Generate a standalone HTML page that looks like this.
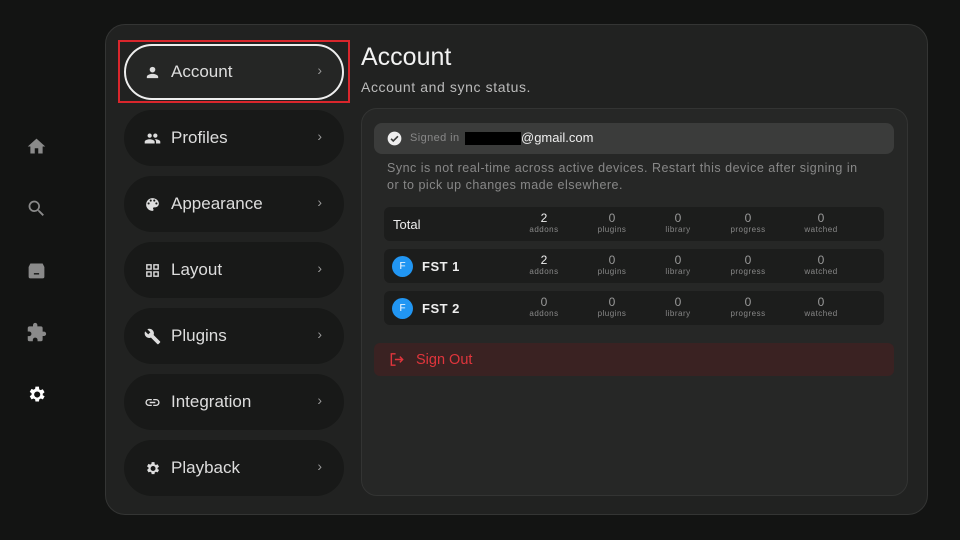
<!DOCTYPE html>
<html><head><meta charset="utf-8"><style>
*{margin:0;padding:0;box-sizing:border-box}
body{width:960px;height:540px;background:#131413;font-family:"Liberation Sans",sans-serif;position:relative;overflow:hidden;color:#eee}
.abs{position:absolute}
.panel{left:105px;top:24px;width:823px;height:491px;background:#212221;border:1px solid #343534;border-radius:20px}
.pill{position:absolute;left:124px;width:220px;height:56px;border-radius:28px;background:#181918;display:flex;align-items:center;padding-left:20px;font-size:17px;color:#ddd}
.pill svg{width:17px;height:17px;margin-right:10px;fill:#ddd}
.pill .ch{position:absolute;right:22px;top:18px;color:#999;font-size:14px}
.card{left:361px;top:108px;width:547px;height:388px;background:#262726;border:1px solid #333433;border-radius:16px}
.row{position:absolute;left:384px;width:500px;height:34px;background:#1c1d1c;border-radius:6px;font-size:13px;color:#eee}
.st{position:absolute;top:5px;width:60px;text-align:center;font-size:12px;color:#999;line-height:12px}
.st small{display:block;font-size:8px;color:#888;letter-spacing:.5px;line-height:11px}
.st.b{color:#eee}
.av{position:absolute;left:8px;top:7px;width:21px;height:21px;border-radius:50%;background:#2196f3;color:#fff;font-size:10px;text-align:center;line-height:21px}
.side svg{position:absolute;left:26px;width:21px;height:21px;fill:#8a8a8a}
</style></head><body>
<div class="side">
<svg style="top:136px" viewBox="0 0 24 24"><path d="M10 20v-6h4v6h5v-8h3L12 3 2 12h3v8z"/></svg>
<svg style="top:198px" viewBox="0 0 24 24"><path d="M15.5 14h-.8l-.3-.3A6.5 6.5 0 1 0 9.5 16a6.5 6.5 0 0 0 4.2-1.6l.3.3v.8l5 5 1.5-1.5-5-5zm-6 0A4.5 4.5 0 1 1 14 9.5 4.5 4.5 0 0 1 9.5 14z"/></svg>
<svg style="top:260px" viewBox="0 0 24 24"><path d="M5 4h14l2 4v11a2 2 0 0 1-2 2H5a2 2 0 0 1-2-2V8zm4 11v1.5h6V15z"/></svg>
<svg style="top:322px" viewBox="0 0 24 24"><path d="M20.5 11H19V7a2 2 0 0 0-2-2h-4V3.5a2.5 2.5 0 0 0-5 0V5H4a2 2 0 0 0-2 2v3.8h1.5a2.7 2.7 0 0 1 0 5.4H2V20a2 2 0 0 0 2 2h3.8v-1.5a2.7 2.7 0 0 1 5.4 0V22H17a2 2 0 0 0 2-2v-4h1.5a2.5 2.5 0 0 0 0-5z"/></svg>
<svg style="top:384px;fill:#fff" viewBox="0 0 24 24"><path d="M19.1 12.9a7 7 0 0 0 0-1.8l2.1-1.6-2-3.5-2.5 1a7 7 0 0 0-1.6-.9L14.8 3h-4l-.4 2.6a7 7 0 0 0-1.6.9l-2.5-1-2 3.5 2.1 1.6a7 7 0 0 0 0 1.8l-2.1 1.6 2 3.5 2.5-1a7 7 0 0 0 1.6.9l.4 2.6h4l.4-2.6a7 7 0 0 0 1.6-.9l2.5 1 2-3.5zM12.8 15.5a3.5 3.5 0 1 1 0-7 3.5 3.5 0 0 1 0 7z"/></svg>
</div>
<div class="abs panel"></div>
<div class="pill" style="top:44px;background:#252625;border:2px solid #eee;padding-left:18px"><svg viewBox="0 0 24 24"><path d="M12 12a4 4 0 1 0 0-8 4 4 0 0 0 0 8zm0 2c-2.7 0-8 1.3-8 4v2h16v-2c0-2.7-5.3-4-8-4z"/></svg>Account<span class="ch" style="right:20px;top:16px">›</span></div>
<div class="abs" style="left:118px;top:40px;width:232px;height:63px;border:2px solid #d9262c"></div>
<div class="pill" style="top:110px"><svg viewBox="0 0 24 24"><path d="M16 11a3 3 0 1 0 0-6 3 3 0 0 0 0 6zm-8 0a3 3 0 1 0 0-6 3 3 0 0 0 0 6zm0 2c-2.3 0-7 1.2-7 3.5V19h14v-2.5C15 14.2 10.3 13 8 13zm8 0h-1c1.2.8 2 2 2 3.5V19h6v-2.5c0-2.3-4.7-3.5-7-3.5z"/></svg>Profiles<span class="ch">›</span></div>
<div class="pill" style="top:176px"><svg viewBox="0 0 24 24"><path d="M12 3a9 9 0 0 0 0 18 1.5 1.5 0 0 0 1.1-2.5 1.5 1.5 0 0 1 1.1-2.5H16a5 5 0 0 0 5-5c0-4.4-4-8-9-8zm-5.5 9a1.5 1.5 0 1 1 0-3 1.5 1.5 0 0 1 0 3zm3-4a1.5 1.5 0 1 1 0-3 1.5 1.5 0 0 1 0 3zm5 0a1.5 1.5 0 1 1 0-3 1.5 1.5 0 0 1 0 3zm3 4a1.5 1.5 0 1 1 0-3 1.5 1.5 0 0 1 0 3z"/></svg>Appearance<span class="ch">›</span></div>
<div class="pill" style="top:242px"><svg viewBox="0 0 24 24"><path d="M3 3h8v8H3zm2 2v4h4V5zm8-2h8v8h-8zm2 2v4h4V5zM3 13h8v8H3zm2 2v4h4v-4zm8-2h8v8h-8zm2 2v4h4v-4z"/></svg>Layout<span class="ch">›</span></div>
<div class="pill" style="top:308px"><svg viewBox="0 0 24 24"><path d="M22.7 19l-9.1-9.1c.9-2.3.4-5-1.5-6.9-2-2-5-2.4-7.4-1.3L9 6 6 9 1.6 4.7C.4 7.1.9 10.1 2.9 12.1c1.9 1.9 4.6 2.4 6.9 1.5l9.1 9.1c.4.4 1 .4 1.4 0l2.3-2.3c.5-.4.5-1.1.1-1.4z"/></svg>Plugins<span class="ch">›</span></div>
<div class="pill" style="top:374px"><svg viewBox="0 0 24 24"><path d="M3.9 12c0-1.7 1.4-3.1 3.1-3.1h4V7H7a5 5 0 0 0 0 10h4v-1.9H7c-1.7 0-3.1-1.4-3.1-3.1zM8 13h8v-2H8zm9-6h-4v1.9h4c1.7 0 3.1 1.4 3.1 3.1s-1.4 3.1-3.1 3.1h-4V17h4a5 5 0 0 0 0-10z"/></svg>Integration<span class="ch">›</span></div>
<div class="pill" style="top:440px"><svg viewBox="0 0 24 24"><path d="M19.1 12.9a7 7 0 0 0 0-1.8l2.1-1.6-2-3.5-2.5 1a7 7 0 0 0-1.6-.9L14.8 3h-4l-.4 2.6a7 7 0 0 0-1.6.9l-2.5-1-2 3.5 2.1 1.6a7 7 0 0 0 0 1.8l-2.1 1.6 2 3.5 2.5-1a7 7 0 0 0 1.6.9l.4 2.6h4l.4-2.6a7 7 0 0 0 1.6-.9l2.5 1 2-3.5zM12.8 15.5a3.5 3.5 0 1 1 0-7 3.5 3.5 0 0 1 0 7z"/></svg>Playback<span class="ch">›</span></div>

<div class="abs" style="left:361px;top:43px;font-size:25px;color:#f2f2f2">Account</div>
<div class="abs" style="left:361px;top:79px;font-size:14px;color:#bbb;letter-spacing:.6px">Account and sync status.</div>
<div class="abs card"></div>
<div class="abs" style="left:374px;top:123px;width:520px;height:31px;background:#3b3c3b;border-radius:8px"></div>
<svg class="abs" style="left:387px;top:131px" width="15" height="15" viewBox="0 0 24 24"><circle cx="12" cy="12" r="11" fill="#eee"/><path d="M6.5 12.5l3.5 3.5 7.5-7.5" stroke="#3b3c3b" stroke-width="2.6" fill="none"/></svg>
<div class="abs" style="left:410px;top:132px;font-size:11px;color:#888;letter-spacing:.4px">Signed in</div>
<div class="abs" style="left:465px;top:132px;width:56px;height:13px;background:#000"></div>
<div class="abs" style="left:521px;top:130px;font-size:13px;color:#eee">@gmail.com</div>
<div class="abs" style="left:387px;top:160px;font-size:12.5px;color:#888;line-height:17px;letter-spacing:.5px;width:475px">Sync is not real-time across active devices. Restart this device after signing in<br>or to pick up changes made elsewhere.</div>

<div class="row" style="top:207px"><span class="abs" style="left:9px;top:10px">Total</span>
<div class="st b" style="left:130px">2<small>addons</small></div><div class="st" style="left:198px">0<small>plugins</small></div><div class="st" style="left:264px">0<small>library</small></div><div class="st" style="left:334px">0<small>progress</small></div><div class="st" style="left:407px">0<small>watched</small></div></div>
<div class="row" style="top:249px"><div class="av">F</div><span class="abs" style="left:38px;top:10px;font-weight:bold;letter-spacing:.5px">FST 1</span>
<div class="st b" style="left:130px">2<small>addons</small></div><div class="st" style="left:198px">0<small>plugins</small></div><div class="st" style="left:264px">0<small>library</small></div><div class="st" style="left:334px">0<small>progress</small></div><div class="st" style="left:407px">0<small>watched</small></div></div>
<div class="row" style="top:291px"><div class="av">F</div><span class="abs" style="left:38px;top:10px;font-weight:bold;letter-spacing:.5px">FST 2</span>
<div class="st" style="left:130px">0<small>addons</small></div><div class="st" style="left:198px">0<small>plugins</small></div><div class="st" style="left:264px">0<small>library</small></div><div class="st" style="left:334px">0<small>progress</small></div><div class="st" style="left:407px">0<small>watched</small></div></div>

<div class="abs" style="left:374px;top:343px;width:520px;height:33px;background:#3a2222;border-radius:6px"></div>
<svg class="abs" style="left:388px;top:351px" width="18" height="17" viewBox="0 0 24 24"><path d="M10 4H4v16h6M9 12h11M16 8l4 4-4 4" stroke="#e0353c" stroke-width="2" fill="none"/></svg>
<div class="abs" style="left:416px;top:352px;font-size:14.5px;color:#e0353c">Sign Out</div>
</body></html>
